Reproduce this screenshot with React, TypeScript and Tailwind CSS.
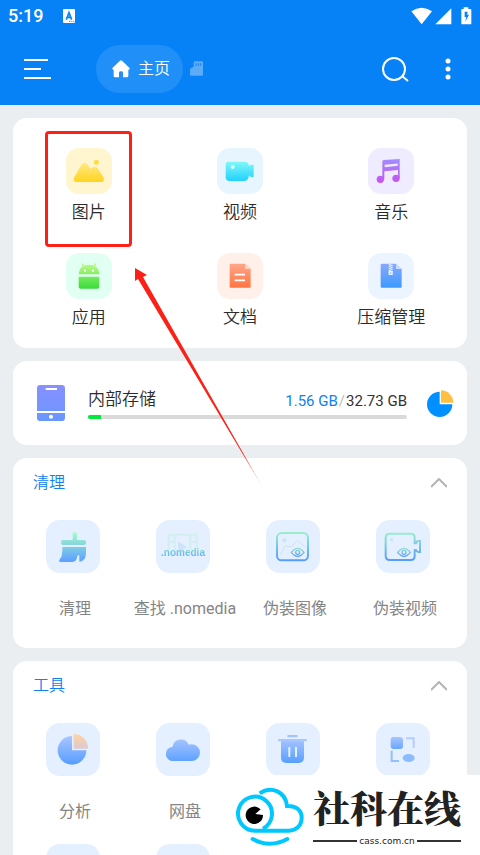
import { ReactNode } from "react";

interface Category {
  label: string;
  tile: string;
  icon: ReactNode;
}

interface Tool {
  label?: string;
  icon: ReactNode;
}

interface GradientProps {
  id: string;
  from: string;
  to: string;
}

function Gradient({ id, from, to }: GradientProps) {
  return (
    <linearGradient id={id} x1="0" y1="35" x2="0" y2="120" gradientUnits="userSpaceOnUse">
      <stop offset="0" stopColor={from} />
      <stop offset="1" stopColor={to} />
    </linearGradient>
  );
}

const categories: Category[] = [
  {
    label: "图片",
    tile: "bg-[#fff6cf]",
    icon: (
      <>
        <Gradient id="pic" from="#ffec94" to="#ffce00" />
        <g fill="url(#pic)">
          <path d="M25 87L44 54Q56 35 68 54L74 63Q85 50 96 62L112 87Q119 102 104 102H33Q19 102 25 87Z" />
        </g>
        <circle cx="91" cy="43" r="7.500" fill="#ffdc43" />
      </>
    ),
  },
  {
    label: "视频",
    tile: "bg-[#e6f5ff]",
    icon: (
      <>
        <Gradient id="vid" from="#8afcf8" to="#00c3ff" />
        <g fill="url(#vid)">
          <path d="M34 41H84Q96 43 96 54L102 50H110V87H102L96 82Q95 97 84 99H36Q26 98 26 88V51Q26 42 34 41Z" />
        </g>
        <circle cx="47" cy="57" r="6" fill="#e6fbff" />
      </>
    ),
  },
  {
    label: "音乐",
    tile: "bg-[#f0ecff]",
    icon: (
      <>
        <Gradient id="mus" from="#a28bff" to="#ce45ec" />
        <g fill="url(#mus)">
          <path d="M43 40Q43 37 47 36L95 33V91H90V66L49 70V94H43Z" />
          <circle cx="37" cy="94" r="11" />
          <circle cx="84" cy="91" r="11" />
        </g>
        <path d="M50 54L89 50" stroke="#f0ecff" strokeWidth="7" />
      </>
    ),
  },
  {
    label: "应用",
    tile: "bg-[#e2fff3]",
    icon: (
      <>
        <Gradient id="app" from="#b9fa82" to="#22d62e" />
        <g fill="url(#app)">
          <path d="M38 64Q39 35 69 35Q99 35 100 64Z" />
          <path d="M38 71H100V101Q100 107 94 107H44Q38 107 38 101Z" />
        </g>
        <path d="M48 32L54 42M89 32L83 42" stroke="#b4f57d" strokeWidth="4" />
        <circle cx="57" cy="53" r="3.500" fill="#fff" />
        <circle cx="81" cy="53" r="3.500" fill="#fff" />
      </>
    ),
  },
  {
    label: "文档",
    tile: "bg-[#fff0e9]",
    icon: (
      <>
        <Gradient id="doc" from="#ffa587" to="#ff6a30" />
        <path d="M41 32H84L101 48V101Q101 104 98 104H41Q38 104 38 101V35Q38 32 41 32Z" fill="url(#doc)" />
        <path d="M84 32V48H101Z" fill="#ffd2c0" />
        <path d="M53 65H84M53 82H84" stroke="#fff" strokeWidth="5" />
      </>
    ),
  },
  {
    label: "压缩管理",
    tile: "bg-[#ecf5ff]",
    icon: (
      <>
        <Gradient id="zip" from="#85a8ff" to="#2b97fb" />
        <path d="M41 32H84L101 48V101Q101 104 98 104H41Q38 104 38 101V35Q38 32 41 32Z" fill="url(#zip)" />
        <path d="M84 32V48H101Z" fill="#c6dcff" />
        <path d="M65 32V60M71 35V62" stroke="#eaf2ff" strokeWidth="6" strokeDasharray="4 2" />
        <path d="M62 54H74V66H62Z" fill="#eaf2ff" />
        <path d="M66 60H70" stroke="#7fb0fa" strokeWidth="3" />
      </>
    ),
  },
];

function Eye({ cx, stroke }: { cx: number; stroke: string }) {
  return (
    <g transform={`translate(${cx} 97)`} fill="none" stroke={stroke} strokeWidth="4">
      <path d="M-19 0Q-9 -12 0 -12T19 0Q9 12 0 12T-19 0Z" />
      <circle r="6" />
    </g>
  );
}

const cleanTools: Tool[] = [
  {
    label: "清理",
    icon: (
      <>
        <Gradient id="brush" from="#a8ffc4" to="#5fa3ff" />
        <g fill="url(#brush)">
          <path d="M80 64V42Q80 36 86.500 36T93 42V64Z" />
          <rect x="45" y="60" width="75" height="15" rx="6" />
          <path d="M49 81H120V100Q119 125 100 125V108Q97 102 94 109Q91 126 80 126H42Q37 123 42 117Q49 108 49 92Z" />
        </g>
      </>
    ),
  },
  {
    label: "查找 .nomedia",
    icon: (
      <g fill="none" stroke="#d2eeee" strokeWidth="6">
        <path d="M38 90V50Q38 44 43 44H116Q122 44 122 50V90M56 43V90M103 43V90M35 66H56M103 66H124" />
        <path d="M66 64L94 81L66 98Z" fill="#cfe4fa" stroke="none" />
      </g>
    ),
  },
  {
    label: "伪装图像",
    icon: (
      <>
        <Gradient id="fimg" from="#9df0cb" to="#579dff" />
        <rect x="33" y="39" width="93" height="82" rx="14" fill="none" stroke="url(#fimg)" strokeWidth="6" />
        <path d="M42 105L57 78L77 80L94 61L117 80" fill="none" stroke="#cbe3f8" strokeWidth="3" />
        <circle cx="55" cy="61" r="6" fill="#c9e4f7" />
        <Eye cx={95} stroke="url(#eye)" />
      </>
    ),
  },
  {
    label: "伪装视频",
    icon: (
      <>
        <Gradient id="fvid" from="#9df0cb" to="#579dff" />
        <path
          d="M42 41H104Q116 41 116 53V70H120Q122 63 127 63H132V96H127Q122 96 120 90H116V108Q116 120 104 120H42Q29 120 29 108V53Q29 41 42 41Z"
          fill="none"
          stroke="url(#fvid)"
          strokeWidth="6"
        />
        <circle cx="47" cy="59" r="5" fill="#c9e4f7" />
        <Eye cx={84} stroke="url(#eye)" />
      </>
    ),
  },
];

const moreTools: Tool[] = [
  {
    label: "分析",
    icon: (
      <>
        <Gradient id="pie" from="#b0c8ff" to="#5a9fff" />
        <Gradient id="slice" from="#ffd2a4" to="#b6c2ff" />
        <path d="M78 39V82H121A43 43 0 1 1 78 39Z" fill="url(#pie)" />
        <path d="M83 33A43 43 0 0 1 126 77H83Z" fill="url(#slice)" />
      </>
    ),
  },
  {
    label: "网盘",
    icon: (
      <>
        <Gradient id="cloud" from="#b5cbff" to="#589fff" />
        <path d="M52 114A21 21 0 0 1 50 71A25 25 0 0 1 98 65Q103 63 108 64A25 25 0 0 1 106 114Z" fill="url(#cloud)" />
      </>
    ),
  },
  {
    icon: (
      <>
        <Gradient id="bin" from="#b5cbff" to="#589fff" />
        <path d="M45 53H114V103Q114 120 98 120H61Q45 120 45 103Z" fill="url(#bin)" />
        <rect x="36" y="48" width="87" height="7" rx="3" fill="#a9c6ff" />
        <rect x="64" y="36" width="31" height="7" rx="3" fill="#a0c4ff" />
        <path d="M70 72V102M90 72V102" stroke="#e4f0ff" strokeWidth="6" />
      </>
    ),
  },
  {
    icon: (
      <>
        <linearGradient id="block" x1="0" y1="0" x2="0" y2="1">
          <stop offset="0" stopColor="#a9c4ff" />
          <stop offset="1" stopColor="#68a6ff" />
        </linearGradient>
        <rect x="44" y="42" width="37" height="36" rx="9" fill="url(#block)" />
        <path d="M90 46H113V74" fill="none" stroke="#b4cdff" strokeWidth="6" />
        <path d="M47 83V114H69" fill="none" stroke="#94bfff" strokeWidth="6" />
        <ellipse cx="98" cy="105" rx="18" ry="12" fill="#8cbcff" />
      </>
    ),
  },
  { icon: null },
  { icon: null },
  { icon: null },
  { icon: null },
];

function StatusBar() {
  return (
    <div className="flex h-8 items-center pl-2 pr-2 text-white">
      <span className="text-lg font-medium">5:19</span>
      <svg className="ml-5" width="12" height="14" viewBox="0 0 36 42">
        <rect width="36" height="42" rx="3" fill="#fff" />
        <path d="M10 32L18 11L26 32M13 25H23" fill="none" stroke="#0682f6" strokeWidth="5" />
        <path d="M18 37H22M25 37H28M31 37H34" stroke="#0682f6" strokeWidth="3" />
      </svg>
      <svg className="ml-auto" width="61" height="18" viewBox="0 0 183 54" fill="#fff">
        <path d="M1 13Q32 -8 63 13L32 52Z" />
        <path d="M73 52L121 4V52Z" />
        <path
          fillRule="evenodd"
          d="M151 6H158V1H172V6H179Q181 6 181 8V50Q181 52 179 52H153Q151 52 151 50V8Q151 6 153 6ZM170 14H161V30H166L163 44L174 23H168Z"
        />
      </svg>
    </div>
  );
}

function Toolbar() {
  return (
    <div className="flex h-[73px] items-center pl-6 pr-5 text-white">
      <button aria-label="菜单">
        <svg width="27" height="22" viewBox="0 0 27 22" stroke="#fff" strokeWidth="2">
          <path d="M0 2H24M0 11H17M0 20H27" />
        </svg>
      </button>
      <button className="ml-[45px] flex h-12 items-center gap-2 rounded-full bg-[#2090f8] pl-4 pr-[13px] text-base font-[350] leading-6">
        <svg width="18" height="18" viewBox="0 0 54 54" fill="#fff">
          <path d="M24 2Q27 0 30 2L52 23Q55 28 49 29V48Q49 52 45 52H33V38Q33 34 27 34T21 38V52H9Q5 52 5 48V29Q-1 28 2 23Z" />
        </svg>
        主页
      </button>
      <button aria-label="存储卡" className="ml-[7px]">
        <svg width="13" height="15" viewBox="0 0 39 45">
          <path d="M15 1H36Q39 1 39 4V41Q39 44 36 44H3Q0 44 0 41V26Q0 22 5 20L11 17V5Q11 1 15 1Z" fill="#5cabf9" />
          <path d="M18 7V15M25 7V15M32 7V15" stroke="#2a8df5" strokeWidth="4" />
        </svg>
      </button>
      <button aria-label="搜索" className="ml-auto">
        <svg width="28" height="26" viewBox="0 0 28 26" fill="none" stroke="#fff" strokeWidth="2">
          <circle cx="13" cy="13" r="11" />
          <path d="M21 20L27 25" />
        </svg>
      </button>
      <button aria-label="更多选项" className="ml-[27px] flex w-6 justify-center">
        <svg width="6" height="24" viewBox="0 0 6 24" fill="#fff">
          <circle cx="3" cy="4" r="2.500" />
          <circle cx="3" cy="12" r="2.500" />
          <circle cx="3" cy="20" r="2.500" />
        </svg>
      </button>
    </div>
  );
}

function StorageCard() {
  const used = 1.56;
  const total = 32.73;

  return (
    <section className="flex h-[84px] items-center rounded-[14px] bg-white pl-6 pr-[13px]">
      <svg width="28" height="36" viewBox="0 0 84 108">
        <linearGradient id="phone" x1="0" y1="0" x2="0" y2="1">
          <stop offset="0" stopColor="#8890ff" />
          <stop offset="1" stopColor="#6a97ff" />
        </linearGradient>
        <rect width="84" height="108" rx="10" fill="url(#phone)" />
        <path d="M26 12H60M0 81H84" stroke="#fff" strokeWidth="6" />
        <circle cx="42" cy="95" r="6" fill="#fff" />
      </svg>
      <div className="ml-[23px] flex-1">
        <div className="flex items-center justify-between">
          <span className="text-[17px] font-[350] leading-6 text-[#2b2b2b]">内部存储</span>
          <span className="pt-1 text-[15px] leading-5 text-[#333]">
            <span className="text-[#0d82f0]">{used} GB</span>
            <span className="px-px text-[#bbb]">/</span>
            {total} GB
          </span>
        </div>
        <div className="mt-1 h-1 overflow-hidden rounded-full bg-[#dadada]">
          <div className="h-full bg-[#00e83c]" style={{ width: `${(used / total) * 85}%` }} />
        </div>
      </div>
      <svg className="ml-5" width="27" height="27" viewBox="0 0 81 81">
        <path d="M38 5V43H76A38 38 0 1 1 38 5Z" fill="#0090ff" />
        <path d="M42 1A37 37 0 0 1 79 38H42Z" fill="#ffc042" />
      </svg>
    </section>
  );
}

function ToolSection({ title, tools }: { title: string; tools: Tool[] }) {
  return (
    <section className="shrink-0 rounded-[14px] bg-white px-[7px] pb-[27px]">
      <div className="flex h-[50px] items-center justify-between pl-[13px] pr-[13px]">
        <h2 className="text-base font-[350] leading-6 text-[#0d82f0]">{title}</h2>
        <button aria-label="收起">
          <svg width="16" height="10" viewBox="0 0 16 10" fill="none" stroke="#b4b4b4" strokeWidth="2">
            <path d="M0 9L8 1L16 9" />
          </svg>
        </button>
      </div>
      <div className="grid grid-cols-4 gap-y-5 pt-3">
        {tools.map((tool, i) => (
          <button key={i} className="flex flex-col items-center">
            <span className="relative mr-1 h-[53px] w-[54px] rounded-[14px] bg-[#e4f0ff]">
              <svg width="53" height="53" viewBox="0 0 159 159">
                <linearGradient id="eye" x1="0" y1="-12" x2="0" y2="12" gradientUnits="userSpaceOnUse">
                  <stop offset="0" stopColor="#8fddd4" />
                  <stop offset="1" stopColor="#579dff" />
                </linearGradient>
                {tool.icon}
              </svg>
              {tool.label === "查找 .nomedia" && (
                <span className="absolute inset-x-0 top-[27px] bg-gradient-to-b from-[#8fe0c8] to-[#579dff] bg-clip-text text-center font-['Liberation_Sans',sans-serif] text-[10px] font-bold leading-3 text-transparent">
                  .nomedia
                </span>
              )}
            </span>
            <span className="mt-6 h-6 whitespace-nowrap text-base leading-6 text-[#858585]">{tool.label}</span>
          </button>
        ))}
      </div>
    </section>
  );
}

function SiteBadge() {
  return (
    <div className="absolute bottom-0 right-0 flex h-20 w-[252px] items-start bg-white pl-[7px] pt-3 text-[#222]">
      <svg width="70" height="60" viewBox="45 262 210 180" fill="none" stroke="#00c8ff" strokeWidth="12">
        <path d="M119 281C155 257 197 277 201 319C230 317 245 334 245 354C245 378 228 393 207 393H105A51 51 0 1 1 129 387" />
        <path d="M98 418Q150 446 202 418" strokeLinecap="round" />
        <path d="M106 343L122 329A26 26 0 1 0 129 346Z" fill="#000" stroke="none" />
      </svg>
      <div className="ml-2">
        <div className="font-['Noto_Serif_CJK_SC','Noto_Sans_CJK_SC',serif] text-[37px] font-black leading-10">
          社科在线
        </div>
        <div className="mt-2 flex items-center gap-0.5 font-['DejaVu_Sans',sans-serif] text-[9px] leading-3">
          <span className="h-0.5 flex-1 bg-[#333]" />
          cass.com.cn
          <span className="h-0.5 flex-1 bg-[#333]" />
        </div>
      </div>
    </div>
  );
}

export default function App() {
  return (
    <div className="relative flex h-screen flex-col overflow-hidden bg-[#eaeef1] font-[Roboto,'Noto_Sans_CJK_SC',sans-serif]">
      <header className="shrink-0 bg-[#0682f6]">
        <StatusBar />
        <Toolbar />
      </header>

      <main className="flex flex-col gap-[13px] px-[13px] pt-[13px]">
        <section className="grid shrink-0 grid-cols-3 gap-y-[29px] rounded-[14px] bg-white pb-[19px] pt-[30px]">
          {categories.map((item) => (
            <button key={item.label} className="flex flex-col items-center">
              <span className={`h-[46px] w-[46px] rounded-[13px] ${item.tile}`}>
                <svg width="46" height="46" viewBox="0 0 138 138">
                  {item.icon}
                </svg>
              </span>
              <span className="mt-1.5 text-[17px] font-[350] leading-6 text-[#2b2b2b]">{item.label}</span>
            </button>
          ))}
        </section>
        <StorageCard />
        <ToolSection title="清理" tools={cleanTools} />
        <ToolSection title="工具" tools={moreTools} />
      </main>

      {/* highlight box and pointer */}
      <div className="absolute left-[45px] top-[131px] h-[116px] w-[87px] rounded border-3 border-[#fb2116]" />
      <svg className="absolute left-[134px] top-[267px]" width="130" height="222" viewBox="0 0 130 222">
        <linearGradient id="tail" x1="0" y1="0" x2="0" y2="1">
          <stop offset="0.850" stopColor="#fb2116" />
          <stop offset="1" stopColor="#fb2116" stopOpacity="0.2" />
        </linearGradient>
        <path d="M1 1L13 8L9 10L129 221L4 12L1 14Z" fill="url(#tail)" />
      </svg>

      <SiteBadge />
    </div>
  );
}
